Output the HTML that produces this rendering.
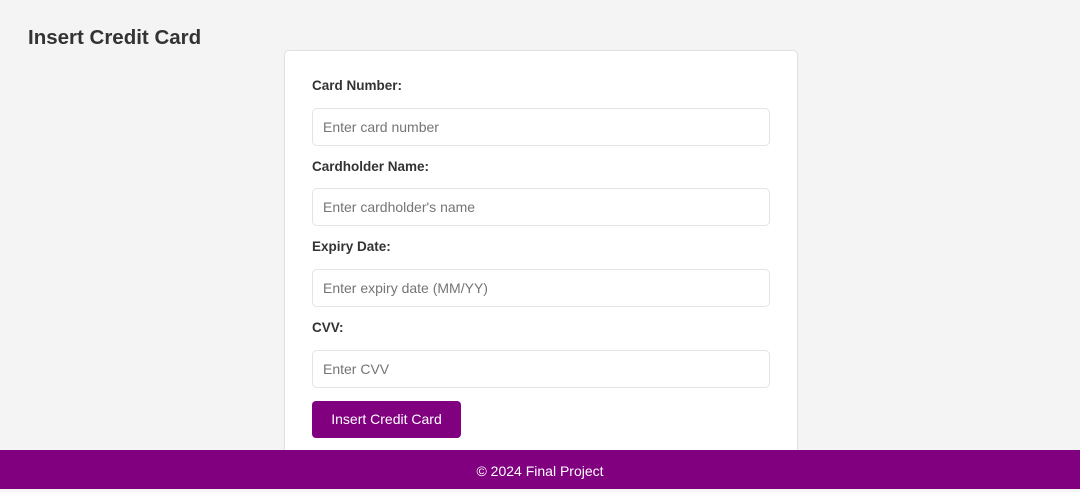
<!DOCTYPE html>
<html><head><style>
body{margin:0;width:1080px;height:489px;background:#f4f4f4;font-family:"Liberation Sans",sans-serif;position:relative;overflow:hidden}
h1{position:absolute;left:28px;top:26px;margin:0;font-size:20.5px;font-weight:bold;color:#333}
.card{position:absolute;left:284px;top:50px;width:514px;height:420px;background:#fff;border:1px solid #e0e0e0;border-radius:5px;box-sizing:border-box}
.lbl{position:absolute;left:27px;font-size:13.5px;font-weight:bold;color:#333}
.inp{position:absolute;left:27px;width:458px;height:38px;box-sizing:border-box;border:1px solid #e4e4e4;border-radius:5px;font-size:14px;color:#757575;padding-left:10px;line-height:36px}
.btn{position:absolute;left:27px;top:350px;width:149px;height:37px;background:#800080;color:#fff;border-radius:4px;font-size:14px;text-align:center;line-height:37px}
footer{position:absolute;left:0;top:450px;width:1080px;height:39px;background:#800080;color:#fff;font-size:14px;text-align:center;line-height:42px}
</style></head><body>
<h1>Insert Credit Card</h1>
<div class="card">
<div class="lbl" style="top:27px">Card Number:</div>
<div class="inp" style="top:57px">Enter card number</div>
<div class="lbl" style="top:108px">Cardholder Name:</div>
<div class="inp" style="top:137px">Enter cardholder's name</div>
<div class="lbl" style="top:188px">Expiry Date:</div>
<div class="inp" style="top:218px">Enter expiry date (MM/YY)</div>
<div class="lbl" style="top:269px">CVV:</div>
<div class="inp" style="top:299px">Enter CVV</div>
<div class="btn">Insert Credit Card</div>
</div>
<footer>© 2024 Final Project</footer>
</body></html>
